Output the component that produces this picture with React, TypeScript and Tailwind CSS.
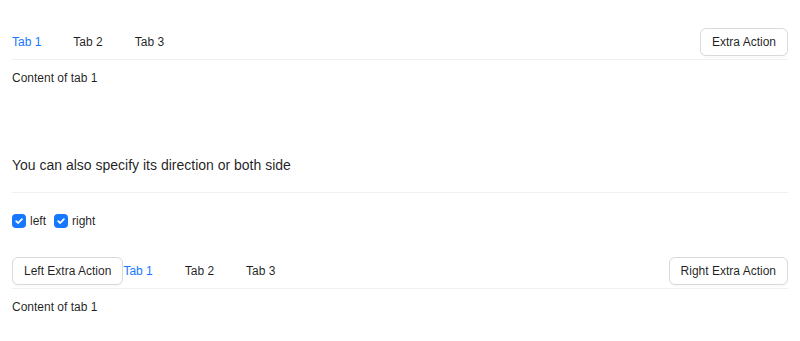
import React from "react";

const font = { fontFamily: '"Liberation Sans", Arial, sans-serif' };

function Btn({ children }: { children: React.ReactNode }) {
  return (
    <button className="h-[28px] px-[11px] border border-[#d9d9d9] rounded-[6px] bg-white text-[12px] leading-[18px] text-[rgba(0,0,0,0.88)] shadow-[0_2px_0_rgba(0,0,0,0.02)] whitespace-nowrap">
      {children}
    </button>
  );
}

function TabList() {
  return (
    <div className="flex items-center gap-[32px] text-[12px] leading-[18px]">
      <span className="text-[#1677ff]">Tab 1</span>
      <span className="text-[rgba(0,0,0,0.88)]">Tab 2</span>
      <span className="text-[rgba(0,0,0,0.88)]">Tab 3</span>
    </div>
  );
}

function Check({ label }: { label: string }) {
  return (
    <label className="flex items-center gap-[4px]">
      <span className="w-[14px] h-[14px] rounded-[4px] bg-[#1677ff] flex items-center justify-center">
        <svg width="10" height="10" viewBox="0 0 10 10">
          <path d="M2.2 5.1 L4.2 7 L7.9 3.1" fill="none" stroke="white" strokeWidth="1.8" strokeLinecap="round" strokeLinejoin="round" />
        </svg>
      </span>
      <span>{label}</span>
    </label>
  );
}

export default function App() {
  return (
    <div className="bg-white w-[800px] h-[341px] px-[12px] pt-[25px] text-[rgba(0,0,0,0.88)]" style={font}>
      <div className="h-[35px] flex items-center justify-between border-b border-[#f0f0f0]">
        <TabList />
        <Btn>Extra Action</Btn>
      </div>
      <div className="mt-[9px] text-[12px] leading-[18px]">Content of tab 1</div>

      <div className="mt-[67px] text-[14px] leading-[22px]">You can also specify its direction or both side</div>
      <div className="mt-[16px] border-t border-[#f0f0f0]" />

      <div className="mt-[19px] flex items-center gap-[8px] text-[12px] leading-[18px]">
        <Check label="left" />
        <Check label="right" />
      </div>

      <div className="mt-[24px] h-[35px] flex items-center border-b border-[#f0f0f0]">
        <Btn>Left Extra Action</Btn>
        <TabList />
        <div className="ml-auto"><Btn>Right Extra Action</Btn></div>
      </div>
      <div className="mt-[9px] text-[12px] leading-[18px]">Content of tab 1</div>
    </div>
  );
}
